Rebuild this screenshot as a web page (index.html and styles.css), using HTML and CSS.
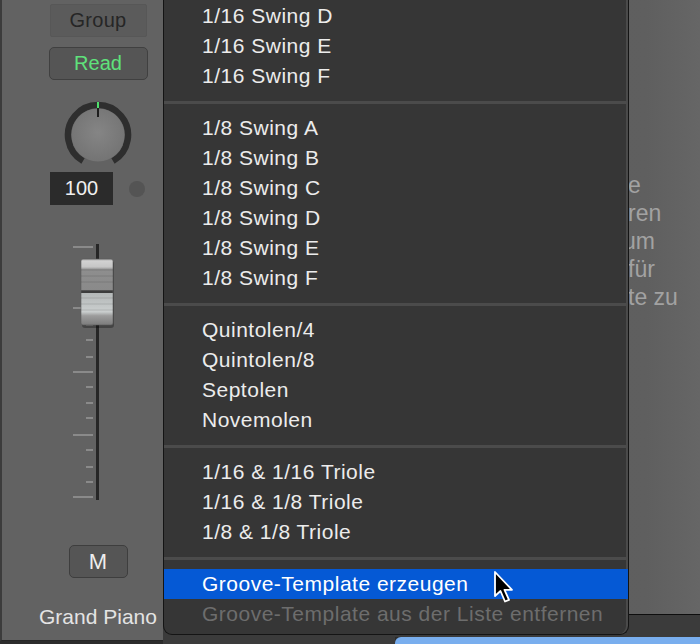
FILE: index.html
```html
<!DOCTYPE html>
<html lang="de">
<head>
  <meta charset="UTF-8" />
  <title>Groove Menu</title>
  <link rel="stylesheet" href="styles.css">
</head>
<body>
  <div class="app">
    <aside class="strip">
      <div class="col">
        <div class="btn group">Group</div>
        <div class="btn read">Read</div>
        <svg class="knob" viewBox="0 0 70 70">
          <defs>
            <radialGradient id="knobGrad" cx="50%" cy="45%" r="55%">
              <stop offset="0%" stop-color="#858585"/>
              <stop offset="100%" stop-color="#747474"/>
            </radialGradient>
          </defs>
          <path d="M20 60.98 A30 30 0 1 1 50 60.98" fill="none" stroke="#2e2e2e" stroke-width="6.5"/>
          <circle cx="35" cy="35" r="26.5" fill="url(#knobGrad)"/>
          <line x1="35" y1="2" x2="35" y2="8" stroke="#4fe06c" stroke-width="2"/>
          <line x1="35" y1="8" x2="35" y2="17" stroke="#1e1e1e" stroke-width="2"/>
        </svg>
        <div class="value-row">
          <div class="value">100</div>
          <span class="dot"></span>
        </div>
        <svg class="fader" viewBox="0 0 136 262">
          <defs>
            <linearGradient id="capGrad" x1="0" y1="0" x2="0" y2="1">
              <stop offset="0%" stop-color="#9a9a9a"/>
              <stop offset="3%" stop-color="#d2d2d2"/>
              <stop offset="12%" stop-color="#c6c6c6"/>
              <stop offset="16%" stop-color="#8e8e8e"/>
              <stop offset="47%" stop-color="#8a8a8a"/>
              <stop offset="48%" stop-color="#3c3c3c"/>
              <stop offset="51%" stop-color="#3c3c3c"/>
              <stop offset="52%" stop-color="#b4b8b8"/>
              <stop offset="80%" stop-color="#cacece"/>
              <stop offset="86%" stop-color="#9c9c9c"/>
              <stop offset="100%" stop-color="#7c7c7c"/>
            </linearGradient>
          </defs>
          <rect x="66" y="4" width="3" height="256" fill="#262626"/>
          <g fill="#8a8a8a">
            <rect x="43" y="6" width="20" height="2"/>
            <rect x="43" y="67" width="20" height="2"/>
            <rect x="43" y="131" width="20" height="2"/>
            <rect x="43" y="194" width="20" height="2"/>
            <rect x="43" y="256" width="20" height="2"/>
            <rect x="56" y="84" width="7" height="2"/>
            <rect x="56" y="99" width="7" height="2"/>
            <rect x="56" y="116" width="7" height="2"/>
            <rect x="56" y="146" width="7" height="2"/>
            <rect x="56" y="162" width="7" height="2"/>
            <rect x="56" y="177" width="7" height="2"/>
            <rect x="56" y="209" width="7" height="2"/>
            <rect x="56" y="226" width="7" height="2"/>
            <rect x="56" y="241" width="7" height="2"/>
          </g>
          <rect x="52" y="21" width="32" height="67" rx="3" fill="rgba(0,0,0,0.3)"/>
          <rect x="51" y="19" width="32" height="66" rx="2" fill="url(#capGrad)" stroke="#5a5a5a" stroke-width="0.6"/>
          <g stroke="rgba(0,0,0,0.12)" stroke-width="1">
            <line x1="51" y1="30" x2="83" y2="30"/>
            <line x1="51" y1="36" x2="83" y2="36"/>
            <line x1="51" y1="42" x2="83" y2="42"/>
            <line x1="51" y1="58" x2="83" y2="58"/>
            <line x1="51" y1="64" x2="83" y2="64"/>
            <line x1="51" y1="70" x2="83" y2="70"/>
          </g>
        </svg>
        <div class="btn mute">M</div>
        <div class="track-name">Grand Piano</div>
      </div>
    </aside>

    <main class="main">
      <div class="editor">
        <div class="help">
          <div>e</div>
          <div>ren</div>
          <div class="shift">um</div>
          <div>für</div>
          <div>te zu</div>
        </div>
      </div>
      <div class="lower"></div>
      <div class="bottom-bar">
        <span class="gap"></span>
        <span class="blue"></span>
      </div>
    </main>
  </div>

  <div class="menu">
    <div class="item">1/16 Swing D</div>
    <div class="item">1/16 Swing E</div>
    <div class="item">1/16 Swing F</div>
    <div class="sep"></div>
    <div class="item">1/8 Swing A</div>
    <div class="item">1/8 Swing B</div>
    <div class="item">1/8 Swing C</div>
    <div class="item">1/8 Swing D</div>
    <div class="item">1/8 Swing E</div>
    <div class="item">1/8 Swing F</div>
    <div class="sep"></div>
    <div class="item">Quintolen/4</div>
    <div class="item">Quintolen/8</div>
    <div class="item">Septolen</div>
    <div class="item">Novemolen</div>
    <div class="sep"></div>
    <div class="item">1/16 &amp; 1/16 Triole</div>
    <div class="item">1/16 &amp; 1/8 Triole</div>
    <div class="item">1/8 &amp; 1/8 Triole</div>
    <div class="sep"></div>
    <div class="item hl">Groove-Template erzeugen</div>
    <div class="item disabled">Groove-Template aus der Liste entfernen</div>
  </div>

  <svg class="cursor" viewBox="0 0 24 34">
    <path d="M2 1 L2 25 L7.5 20 L12 30.5 L16 28.8 L11.5 18.8 L19 18.8 Z" fill="#000" stroke="#fff" stroke-width="1.8" stroke-linejoin="round"/>
  </svg>
</body>
</html>
```

FILE: styles.css
```css
* {
  box-sizing: border-box;
}
body {
  margin: 0;
  width: 700px;
  height: 644px;
  overflow: hidden;
  position: relative;
  background-color: #2c2c2c;
  font-family: 'Liberation Sans', Arial, sans-serif;
}
.app {
  display: flex;
  height: 644px;
}
.strip {
  flex: none;
  width: 163px;
  height: 641px;
  padding-left: 28px;
  background-color: #626262;
  border-left: 2px solid #3c3c3c;
  border-bottom: 1px solid #262626;
}
.col {
  width: 136px;
  display: flex;
  flex-direction: column;
  align-items: center;
}
.btn {
  height: 33px;
  display: flex;
  align-items: center;
  justify-content: center;
  font-size: 20px;
}
.group {
  margin-top: 4px;
  width: 97px;
  background-color: #5b5b5b;
  border: 1px solid #575757;
  border-radius: 2px;
  color: #262626;
  letter-spacing: 0.3px;
}
.read {
  margin-top: 10px;
  width: 99px;
  background-color: #555;
  border: 1px solid #404040;
  border-radius: 5px;
  color: #5fe27b;
}
.knob {
  margin-top: 20px;
  width: 70px;
  height: 70px;
}
.value-row {
  margin-top: 2px;
  align-self: stretch;
  display: flex;
  align-items: center;
  gap: 16px;
  padding-left: 20px;
}
.value {
  width: 63px;
  height: 33px;
  display: flex;
  align-items: center;
  justify-content: center;
  background-color: #2b2b2b;
  color: #f0f0f0;
  font-size: 20px;
}
.dot {
  width: 16px;
  height: 16px;
  border-radius: 50%;
  background-color: #545454;
}
.fader {
  margin-top: 35px;
  width: 136px;
  height: 262px;
}
.mute {
  margin-top: 43px;
  width: 59px;
  background-color: #555;
  border: 1px solid #3e3e3e;
  border-radius: 5px;
  color: #eee;
  font-size: 22px;
}
.track-name {
  margin-top: 29px;
  line-height: 20px;
  font-size: 21px;
  color: #e4e4e4;
  white-space: nowrap;
}
.main {
  flex: 1;
  display: flex;
  flex-direction: column;
}
.editor {
  height: 615px;
  background: linear-gradient(to right, #5a5a5a, #5f5f5f 90%, #666);
  border-bottom: 1px solid #0e0e0e;
}
.help {
  padding-top: 171px;
  padding-left: 465px;
  font-size: 23px;
  line-height: 28px;
  color: #a2a2a2;
  white-space: nowrap;
}
.help .shift {
  margin-left: -5px;
}
.lower {
  height: 22px;
  background-color: #3b3b3b;
}
.bottom-bar {
  height: 7px;
  display: flex;
}
.bottom-bar .gap {
  width: 232px;
  background-color: #3b3b3b;
}
.bottom-bar .blue {
  flex: 1;
  background-color: #79aeee;
  border-radius: 6px 0 0 0;
}
.menu {
  position: absolute;
  left: 163px;
  top: 0;
  width: 466px;
  padding: 1px 0 5px;
  background-color: #363636;
  border: 1px solid #141414;
  border-top: none;
  border-radius: 0 0 9px 9px;
  box-shadow: inset -2px 0 0 #4a4a4a;
  font-size: 21px;
  letter-spacing: 0.5px;
  color: #ececec;
}
.item {
  height: 30px;
  line-height: 30px;
  padding-left: 38px;
  white-space: nowrap;
}
.item.hl {
  background-color: #0559d5;
  color: #fff;
}
.item.disabled {
  color: #6d6d6d;
}
.sep {
  height: 3px;
  margin: 10px 0 9px;
  background-color: #4b4b4b;
}
.cursor {
  position: absolute;
  left: 493px;
  top: 571px;
  width: 24px;
  height: 34px;
}
```
